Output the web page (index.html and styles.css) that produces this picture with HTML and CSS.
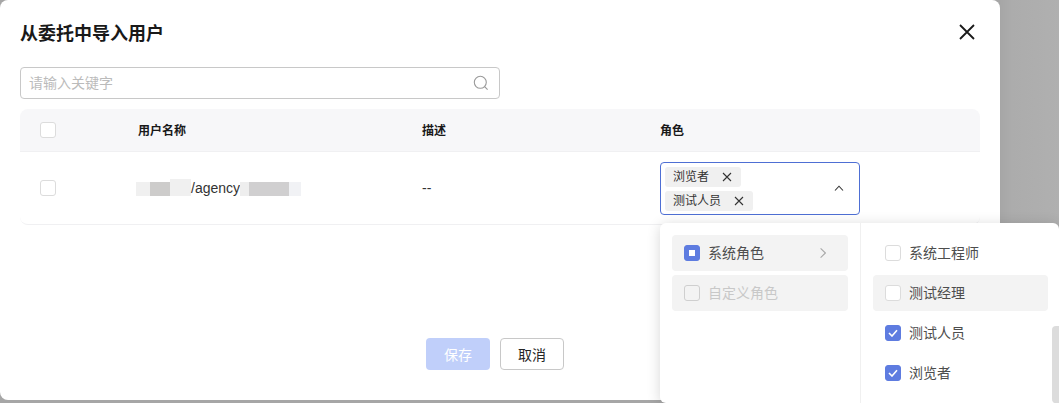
FILE: index.html
```html
<!DOCTYPE html>
<html lang="zh-CN">
<head>
<meta charset="utf-8">
<title>从委托中导入用户</title>
<link rel="stylesheet" href="styles.css">
</head>
<body>
<div class="modal">
  <header class="modal-head">
    <h1 class="modal-title">从委托中导入用户</h1>
    <button class="close-btn" aria-label="关闭">
      <svg width="16" height="16" viewBox="0 0 16 16"><path d="M1 1L15 15M15 1L1 15" stroke="#1a1a1a" stroke-width="1.8" fill="none"/></svg>
    </button>
  </header>
  <div class="search">
    <span class="search-ph">请输入关键字</span>
    <svg width="16" height="16" viewBox="0 0 16 16" class="search-icon"><circle cx="7.3" cy="7.3" r="6" stroke="#9a9a9a" stroke-width="1.1" fill="none"/><path d="M11.6 11.6L14.6 14.6" stroke="#9a9a9a" stroke-width="1.1" fill="none"/></svg>
  </div>
  <div class="table">
    <div class="row row-head">
      <div class="cell-check"><span class="check"></span></div>
      <div class="th">用户名称</div>
      <div class="th">描述</div>
      <div class="th">角色</div>
    </div>
    <div class="row row-body">
      <div class="cell-check"><span class="check"></span></div>
      <div class="td name-cell">
        <span class="blur b1"></span><span class="blur b2"></span><span class="blur b3"></span><span class="agency">/agency</span><span class="blur b4"></span><span class="blur b5"></span><span class="blur b6"></span>
      </div>
      <div class="td">--</div>
      <div class="td">
        <div class="select">
          <div class="tags">
            <span class="tag">浏览者<svg width="10" height="10" viewBox="0 0 10 10" class="tag-x"><path d="M1 1L9 9M9 1L1 9" stroke="#333" stroke-width="1.1" fill="none"/></svg></span>
            <span class="tag">测试人员<svg width="10" height="10" viewBox="0 0 10 10" class="tag-x"><path d="M1 1L9 9M9 1L1 9" stroke="#333" stroke-width="1.1" fill="none"/></svg></span>
          </div>
          <svg width="10" height="6" viewBox="0 0 10 6" class="caret"><path d="M1 5.5L5 1.2L9 5.5" stroke="#333" stroke-width="1.1" fill="none"/></svg>
        </div>
      </div>
    </div>
  </div>
  <footer class="modal-foot">
    <button class="btn btn-primary">保存</button>
    <button class="btn btn-default">取消</button>
  </footer>
</div>

<div class="dropdown">
  <div class="pane pane-left">
    <div class="opt opt-active">
      <span class="box box-on"><span class="box-square"></span></span>
      <span class="opt-label">系统角色</span>
      <svg width="6" height="10" viewBox="0 0 6 10" class="chev"><path d="M0.6 0.4L5.4 5L0.6 9.6" stroke="#a8a8a8" stroke-width="1.1" fill="none"/></svg>
    </div>
    <div class="opt opt-disabled">
      <span class="box box-disabled"></span>
      <span class="opt-label">自定义角色</span>
    </div>
  </div>
  <div class="pane pane-right">
    <div class="opt"><span class="box"></span><span class="opt-label">系统工程师</span></div>
    <div class="opt opt-active"><span class="box"></span><span class="opt-label">测试经理</span></div>
    <div class="opt"><span class="box box-on"><svg width="10" height="8" viewBox="0 0 10 8"><path d="M1 4L4 7L9 1.2" stroke="#fff" stroke-width="1.6" fill="none"/></svg></span><span class="opt-label">测试人员</span></div>
    <div class="opt"><span class="box box-on"><svg width="10" height="8" viewBox="0 0 10 8"><path d="M1 4L4 7L9 1.2" stroke="#fff" stroke-width="1.6" fill="none"/></svg></span><span class="opt-label">浏览者</span></div>
  </div>
  <div class="scroll-thumb"></div>
</div>
</body>
</html>
```

FILE: styles.css
```css
* { box-sizing: border-box; }
html, body { margin: 0; height: 100%; }
body {
  width: 1059px;
  height: 403px;
  overflow: hidden;
  position: relative;
  background: linear-gradient(90deg, #a6a6a6 1000px, #acacac 1012px, #b0b0b0 1059px);
  font-family: "Liberation Sans", "Noto Sans CJK SC", sans-serif;
  font-size: 12px;
  color: #1f1f1f;
}
.modal {
  width: 1000px;
  height: 400px;
  background: #fff;
  border-radius: 8px;
  padding: 0 20px;
  display: flex;
  flex-direction: column;
}
.modal-head {
  height: 67px;
  display: flex;
  justify-content: space-between;
  align-items: flex-start;
  padding-top: 21px;
}
.modal-title {
  margin: 0;
  font-size: 18px;
  line-height: 26px;
  font-weight: 700;
  color: #191919;
}
.close-btn {
  border: 0;
  background: none;
  padding: 0;
  margin: 3px 5px 0 0;
  width: 16px;
  height: 16px;
  display: block;
}
.close-btn svg { display: block; }
.search {
  width: 480px;
  height: 32px;
  border: 1px solid #c8c8c8;
  border-radius: 4px;
  padding: 0 4px 0 8px;
  display: flex;
  align-items: center;
  justify-content: space-between;
  margin-bottom: 10px;
  flex: none;
}
.search-ph { font-size: 14px; color: #bbbbbb; padding-bottom: 2px; }
.search-icon { margin-right: 6px; }
.table { flex: none; }
.row {
  display: grid;
  grid-template-columns: 118px 284px 238px 1fr;
  align-items: center;
}
.row-head {
  height: 43px;
  background: #f7f7f9;
  border-radius: 8px 8px 0 0;
  border-bottom: 1px solid #f0f0f2;
}
.row-body {
  height: 73px;
  border-bottom: 1px solid #f0f0f2;
  border-radius: 0 0 8px 8px;
}
.cell-check { padding-left: 20px; display: flex; }
.check {
  width: 16px;
  height: 16px;
  border: 1px solid #dcdcdc;
  border-radius: 3px;
  background: #fff;
  display: block;
}
.th { font-weight: 700; font-size: 12px; color: #191919; padding-bottom: 2px; }
.td { font-size: 14px; color: #333; }
.name-cell { display: flex; align-items: center; margin-left: -2px; }
.agency { font-size: 14px; line-height: 18px; color: #333; }
.blur { display: block; height: 14px; margin-top: 2px; }
.b1 { width: 14px; background: #f0f0f0; }
.b2 { width: 20px; background: #cdcccb; }
.b3 { width: 21px; height: 17px; background: #f0f0f0; margin-top: -1px; }
.b4 { width: 9px; background: #eeeeee; }
.b5 { width: 40px; background: #d0cfd0; }
.b6 { width: 12px; background: #f1f2f5; }
.select {
  width: 200px;
  height: 53px;
  border: 1px solid #4e6fd4;
  border-radius: 4px;
  padding: 4px 15px 4px 4px;
  display: flex;
  align-items: flex-start;
  justify-content: space-between;
}
.tags { display: flex; flex-direction: column; align-items: flex-start; gap: 4px; }
.tag {
  height: 20px;
  background: #f0f0f0;
  border-radius: 3px;
  padding: 0 9px 0 8px;
  font-size: 12px;
  line-height: 20px;
  color: #333;
  display: flex;
  align-items: center;
}
.tag-x { margin-left: 13px; }
.caret { display: block; align-self: center; }
.modal-foot {
  display: flex;
  justify-content: center;
  gap: 10px;
  margin-top: 113px;
  margin-left: -10px;
}
.btn {
  width: 64px;
  height: 32px;
  border-radius: 4px;
  font-family: inherit;
  font-size: 14px;
  padding: 0;
}
.btn-primary { background: #c0cffa; border: 0; color: #fff; }
.btn-default { background: #fff; border: 1px solid #c8c8c8; color: #252525; }
.dropdown {
  position: absolute;
  left: 660px;
  top: 223px;
  width: 399px;
  height: 180px;
  background: #fff;
  border-radius: 6px;
  box-shadow: 0 2px 14px rgba(0,0,0,.16);
  display: flex;
}
.pane { padding: 12px; display: flex; flex-direction: column; gap: 4px; }
.pane-left { width: 201px; border-right: 1px solid #f0f0f0; }
.pane-right { flex: 1; padding-right: 11px; }
.opt {
  height: 36px;
  border-radius: 4px;
  padding: 0 12px;
  display: flex;
  align-items: center;
  font-size: 14px;
  color: #4d4d4d;
  flex: none;
}
.opt-active { background: #f3f3f3; }
.opt-disabled { background: #f3f3f3; color: #c8c8c8; }
.opt-label { margin-left: 8px; flex: 1; padding-bottom: 2px; }
.box {
  width: 16px;
  height: 16px;
  border: 1px solid #dcdcdc;
  border-radius: 3px;
  background: #fff;
  display: flex;
  align-items: center;
  justify-content: center;
  flex: none;
}
.box-on { background: #5e7ce0; border-color: #5e7ce0; }
.box-disabled { background: #f3f3f3; border-color: #cfcfcf; }
.box-square { width: 6px; height: 6px; background: #fff; display: block; }
.chev { margin-right: 10px; }
.scroll-thumb {
  position: absolute;
  right: 0;
  top: 103px;
  width: 7px;
  height: 77px;
  background: #dcdcdc;
  border-radius: 4px 0 0 4px;
}
```
